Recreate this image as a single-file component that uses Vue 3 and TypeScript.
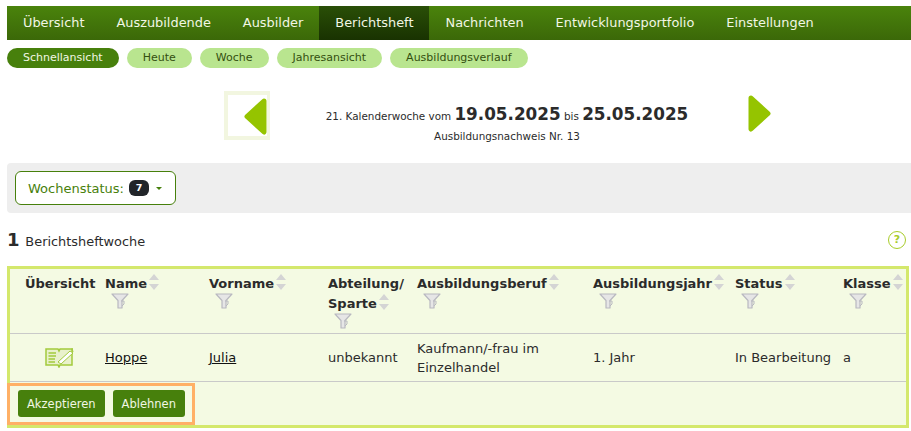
<script setup lang="ts">
const navItems: string[] = ['Übersicht', 'Auszubildende', 'Ausbilder', 'Berichtsheft', 'Nachrichten', 'Entwicklungsportfolio', 'Einstellungen']
const pills: string[] = ['Schnellansicht', 'Heute', 'Woche', 'Jahresansicht', 'Ausbildungsverlauf']
const cols = [
  { key: 'name', label: 'Name' },
  { key: 'vorname', label: 'Vorname' },
  { key: 'abt', label: 'Abteilung/ Sparte' },
  { key: 'beruf', label: 'Ausbildungsberuf' },
  { key: 'jahr', label: 'Ausbildungsjahr' },
  { key: 'status', label: 'Status' },
  { key: 'klasse', label: 'Klasse' },
]
</script>

<template>
  <div class="page">
    <nav class="nav">
      <a v-for="n in navItems" :key="n" class="nav-item" :class="{ active: n === 'Berichtsheft' }">{{ n }}</a>
    </nav>
    <div class="pills">
      <a v-for="p in pills" :key="p" class="pill" :class="{ on: p === 'Schnellansicht' }">{{ p }}</a>
    </div>

    <div class="week">
      <div class="prev">
        <svg width="23" height="37" viewBox="0 0 23 37"><path d="M20 3 L3 18.5 L20 34 Z" fill="#95c400" stroke="#95c400" stroke-width="5" stroke-linejoin="round"/></svg>
      </div>
      <div class="week-text">
        <div class="week-line">21. Kalenderwoche vom <b>19.05.2025</b> bis <b>25.05.2025</b></div>
        <div class="week-sub">Ausbildungsnachweis Nr. 13</div>
      </div>
      <div class="next">
        <svg width="23" height="37" viewBox="0 0 23 37"><path d="M3 3 L20 18.5 L3 34 Z" fill="#95c400" stroke="#95c400" stroke-width="5" stroke-linejoin="round"/></svg>
      </div>
    </div>

    <div class="filterbar">
      <button class="status-btn">Wochenstatus: <span class="badge">7</span><i class="caret"></i></button>
    </div>

    <div class="count-row">
      <div><b class="count">1</b> <span class="count-label">Berichtsheftwoche</span></div>
      <span class="help">?</span>
    </div>

    <div class="table-wrap">
      <table class="tbl">
        <thead>
          <tr>
            <th class="c-over"><span class="th-label">Übersicht</span></th>
            <th v-for="c in cols" :key="c.key" :class="'c-' + c.key">
              <span class="th-label">{{ c.label }}</span><svg class="sort" width="10" height="16" viewBox="0 0 10 16"><path d="M5 0 L10 6 H0 Z M5 16 L10 10 H0 Z" fill="#d4d4d4"/></svg>
              <svg class="funnel" width="18" height="16" viewBox="0 0 18 16"><path d="M1 1 H17 L11 7.5 V15 L7 15 V7.5 Z" fill="#e6e6e6" stroke="#b8b8c0" stroke-width="1.2" stroke-linejoin="round"/><path d="M10 8 H13 V11 L11 13" fill="none" stroke="#b8b8c0"/></svg>
            </th>
          </tr>
        </thead>
        <tbody>
          <tr>
            <td class="c-over icon-cell">
              <svg width="29" height="21" viewBox="0 0 29 21">
                <path d="M1 2 H13 L14 4 L15 2 H27 V18 H15 L14 20 L13 18 H1 Z" fill="#e9f1cc" stroke="#a2ca3c" stroke-width="1.5"/>
                <path d="M3.5 6 H11 M3.5 9 H11 M3.5 12 H10 M3.5 15 H10" stroke="#a2ca3c" stroke-width="1.3"/>
                <path d="M13 15 L25 4 L28 6 L16 17 Z" fill="#fff" stroke="#a2ca3c"/>
                <path d="M27 1 L28 5" stroke="#a2ca3c"/>
              </svg>
            </td>
            <td><a class="link">Hoppe</a></td>
            <td><a class="link">Julia</a></td>
            <td>unbekannt</td>
            <td>Kaufmann/-frau im Einzelhandel</td>
            <td>1. Jahr</td>
            <td>In Bearbeitung</td>
            <td>a</td>
          </tr>
        </tbody>
      </table>
      <div class="actions">
        <button class="act">Akzeptieren</button>
        <button class="act">Ablehnen</button>
      </div>
    </div>
  </div>
</template>

<style>
html, body { margin: 0; background: #fff; overflow: hidden; }
</style>

<style scoped>
.page {
  width: 911px;
  height: 431px;
  overflow: hidden;
  box-sizing: border-box;
  padding: 6px 0 0 7px;
  font-family: "DejaVu Sans", Verdana, sans-serif;
  color: #2b2b2b;
  font-size: 12px;
}
.nav {
  display: flex;
  height: 34px;
  background: linear-gradient(#4a830c, #3b6808);
}
.nav-item {
  padding: 0 16px;
  line-height: 34px;
  font-size: 12.9px;
  color: #f2f7e4;
}
.nav-item.active { background: linear-gradient(#2a4f07, #193201); }
.pills {
  display: flex;
  gap: 8px;
  margin-top: 8px;
}
.pill {
  height: 20px;
  line-height: 20px;
  padding: 0 16px;
  border-radius: 10px;
  background: #b9e58f;
  color: #34500f;
  font-size: 11px;
}
.pill.on { background: #47800c; color: #f2f7e4; }
.week {
  display: flex;
  align-items: flex-start;
  height: 49px;
  margin-top: 23px;
  padding-left: 217px;
}
.prev {
  box-sizing: border-box;
  width: 46px;
  height: 49px;
  border: 4px solid #f2f6e0;
  border-right-width: 3px;
  padding: 3px 0 0 16px;
}
.prev svg, .next svg { display: block; }
.week-text {
  width: 474px;
  text-align: center;
  padding-top: 12px;
  font-size: 10.4px;
}
.week-line { line-height: 22px; }
.week-line b { font-size: 16.8px; }
.week-sub { margin-top: 3px; line-height: 12px; }
.next { margin-top: 4px; margin-left: 4px; }
.filterbar {
  margin-top: 23px;
  height: 50px;
  box-sizing: border-box;
  padding: 8px;
  background: #eeeeee;
  border-radius: 4px 0 0 4px;
}
.status-btn {
  display: flex;
  align-items: center;
  box-sizing: border-box;
  width: 161px;
  height: 34px;
  padding: 0 0 0 12px;
  border: 1px solid #47800c;
  border-radius: 6px;
  background: #fff;
  color: #47800c;
  font: 13px "DejaVu Sans", Verdana, sans-serif;
}
.badge {
  width: 20px;
  height: 16px;
  line-height: 16px;
  margin-left: 5px;
  border-radius: 6px;
  background: #212529;
  color: #fff;
  font-size: 9.5px;
  font-weight: 700;
  text-align: center;
}
.caret {
  width: 0;
  height: 0;
  margin-left: 7px;
  border: 3.5px solid transparent;
  border-top-color: #47800c;
  border-bottom: 0;
}
.count-row {
  display: flex;
  justify-content: space-between;
  align-items: center;
  height: 53px;
  padding-right: 5px;
  box-sizing: border-box;
}
.count { font-size: 18px; margin-right: 2px; }
.count-label { font-size: 12.9px; }
.help {
  box-sizing: border-box;
  width: 18px;
  height: 18px;
  line-height: 15px;
  border: 1.5px solid #a8cc2a;
  border-radius: 50%;
  color: #a8cc2a;
  font-size: 11px;
  font-weight: 700;
  text-align: center;
}
.table-wrap {
  position: relative;
  box-sizing: border-box;
  width: 902px;
  height: 162px;
  border: 3px solid #d4e86c;
  background: #f4fae3;
}
.tbl {
  width: 896px;
  table-layout: fixed;
  border-collapse: separate;
  border-spacing: 0;
  font-size: 13px;
}
.tbl th {
  box-sizing: border-box;
  height: 65px;
  padding: 5px 0 0;
  text-align: left;
  vertical-align: top;
  font-size: 13px;
  line-height: 20px;
  font-weight: 700;
  border-bottom: 1px solid #c9c9c9;
}
.tbl td {
  box-sizing: border-box;
  height: 48px;
  padding: 0;
  line-height: 19px;
  border-bottom: 1px solid #c9c9c9;
  vertical-align: middle;
}
.c-over { width: 95px; padding-left: 15px !important; }
.c-name { width: 104px; }
.c-vorname { width: 119px; }
.c-abt { width: 89px; }
.c-beruf { width: 176px; }
.c-jahr { width: 142px; }
.c-status { width: 108px; }
.c-klasse { width: auto; }
.icon-cell { padding-left: 35px !important; }
.icon-cell svg { display: block; }
.sort { vertical-align: -2px; margin-left: 2px; }
.funnel { display: block; margin: -1px 0 0 6px; }
.link { color: #111; text-decoration: underline; }
.actions {
  position: absolute;
  left: -3px;
  top: 114px;
  box-sizing: border-box;
  display: flex;
  gap: 8px;
  width: 188px;
  height: 42px;
  padding: 4px 8px;
  border: 3px solid #ffb066;
}
.act {
  height: 27px;
  padding: 0 9px;
  border: 0;
  border-radius: 3px;
  background: #47800c;
  color: #f2f7e4;
  font: 11.5px "DejaVu Sans", Verdana, sans-serif;
}
</style>
